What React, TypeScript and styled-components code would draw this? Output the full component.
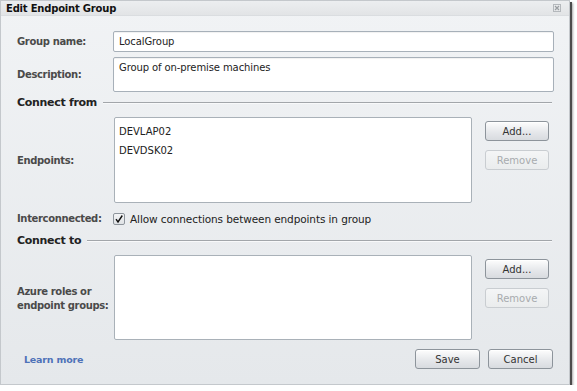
import React, { FC } from 'react'
import styled, { createGlobalStyle } from 'styled-components'

const GlobalStyle = createGlobalStyle`
  html, body {
    margin: 0;
    padding: 0;
    background: #ffffff;
  }
  body {
    font-family: 'DejaVu Sans', Verdana, sans-serif;
    font-size: 10px;
    color: #222;
  }
`

const Dialog = styled.div`
  width: 570px;
  height: 385px;
  box-sizing: border-box;
  border: 1px solid #c4c8cc;
  background: linear-gradient(#f1f3f5, #e5e8eb);
  box-shadow: 2px 2px 0 #4c4c4c, 3px 3px 2px rgba(0, 0, 0, 0.35);
  display: flex;
  flex-direction: column;
`

const TitleBar = styled.div`
  height: 14px;
  display: flex;
  align-items: center;
  justify-content: space-between;
  padding: 0 8px 0 5px;
  background: linear-gradient(#eceef0, #e2e4e6);
  border-bottom: 1px solid #dadde0;
  font-weight: bold;
  font-size: 10px;
  letter-spacing: -0.2px;
  color: #111;
`

const Body = styled.div`
  flex: 1;
  display: flex;
  flex-direction: column;
  padding: 0 15px 0 16px;
`

const Row = styled.div<{ $top: number }>`
  display: grid;
  grid-template-columns: 96px 1fr;
  align-items: center;
  margin-top: ${(p) => p.$top}px;
`

const ListRow = styled.div<{ $top: number }>`
  display: grid;
  grid-template-columns: 97px 358px 1fr;
  align-items: center;
  margin-top: ${(p) => p.$top}px;
`

const Label = styled.div`
  font-weight: bold;
  color: #4a4a4a;
  line-height: 13px;
  white-space: nowrap;
  letter-spacing: -0.35px;
`

const TallLabel = styled(Label)`
  line-height: 14px;
  padding-top: 3px;
`

const TextInput = styled.div<{ $h: number }>`
  height: ${(p) => p.$h}px;
  box-sizing: border-box;
  border: 1px solid #a7b0b9;
  border-radius: 2px;
  background: #fff;
  box-shadow: inset 0 1px 1px rgba(0, 0, 0, 0.06);
  padding: 3px 5px;
  color: #222;
  line-height: 13px;
  letter-spacing: -0.1px;
`

const ListBox = styled.div<{ $h: number }>`
  height: ${(p) => p.$h}px;
  box-sizing: border-box;
  border: 1px solid #a9b1b8;
  border-radius: 2px;
  background: #fff;
  padding: 4px 4px;
  align-self: start;
`

const ListItem = styled.div`
  height: 19px;
  line-height: 19px;
  color: #222;
`

const Section = styled.div<{ $top: number }>`
  display: flex;
  align-items: center;
  gap: 6px;
  margin-top: ${(p) => p.$top}px;
  font-weight: bold;
  font-size: 11px;
  letter-spacing: -0.3px;
  color: #222;
  padding-right: 2px;
  &::after {
    content: '';
    flex: 1;
    height: 1px;
    background: #a2a6aa;
    border-bottom: 1px solid #f8f9fa;
  }
`

const ButtonCol = styled.div`
  align-self: start;
  display: flex;
  flex-direction: column;
  gap: 9px;
  padding: 4px 0 0 13px;
`

const Button = styled.button<{ $disabled?: boolean; $w?: number }>`
  width: ${(p) => p.$w ?? 64}px;
  height: 20px;
  box-sizing: border-box;
  border-radius: 3px;
  font-family: 'DejaVu Sans', Verdana, sans-serif;
  font-size: 10px;
  padding: 0;
  border: 1px solid ${(p) => (p.$disabled ? '#c9cdd1' : '#8d949b')};
  color: ${(p) => (p.$disabled ? '#a8abae' : '#333')};
  background: ${(p) =>
    p.$disabled ? 'linear-gradient(#f4f5f6, #eaeced)' : 'linear-gradient(#fdfdfd, #e6e8eb 55%, #d8dbdf)'};
  box-shadow: ${(p) => (p.$disabled ? 'none' : 'inset 0 1px 0 #fff')};
`

const CheckRow = styled.div`
  display: flex;
  align-items: center;
  gap: 5px;
  color: #222;
  font-size: 10.5px;
  letter-spacing: -0.1px;
`

const CheckBox = styled.span`
  width: 12px;
  height: 12px;
  box-sizing: border-box;
  border: 1px solid #8e959c;
  border-radius: 2px;
  background: linear-gradient(#f4f5f6, #dfe2e5);
  display: flex;
  align-items: center;
  justify-content: center;
`

const Footer = styled.div`
  margin-top: 9px;
  display: flex;
  align-items: center;
  justify-content: space-between;
  padding: 0 1px 0 7px;
`

const Link = styled.a`
  color: #4e72b8;
  font-weight: bold;
  text-decoration: none;
  font-size: 9.5px;
  letter-spacing: -0.2px;
`

const FooterButtons = styled.div`
  display: flex;
  gap: 8px;
`

const CloseIcon: FC = () => (
  <svg width="8" height="8" viewBox="0 0 8 8">
    <rect x="0.5" y="0.5" width="7" height="7" fill="none" stroke="#b4b8bc" />
    <path d="M2 2 L6 6 M6 2 L2 6" stroke="#9a9ea2" strokeWidth="1.2" />
  </svg>
)

const App: FC = () => {
  const endpoints = ['DEVLAP02', 'DEVDSK02']

  return (
    <>
      <GlobalStyle />
      <Dialog>
        <TitleBar>
          <span>Edit Endpoint Group</span>
          <CloseIcon />
        </TitleBar>
        <Body>
          <Row $top={15}>
            <Label>Group name:</Label>
            <TextInput $h={21}>LocalGroup</TextInput>
          </Row>
          <Row $top={5}>
            <Label>Description:</Label>
            <TextInput $h={35}>Group of on-premise machines</TextInput>
          </Row>

          <Section $top={4}>Connect from</Section>
          <ListRow $top={8}>
            <Label>Endpoints:</Label>
            <ListBox $h={86}>
              {endpoints.map((e) => (
                <ListItem key={e}>{e}</ListItem>
              ))}
            </ListBox>
            <ButtonCol>
              <Button>Add...</Button>
              <Button $disabled>Remove</Button>
            </ButtonCol>
          </ListRow>
          <Row $top={9}>
            <Label>Interconnected:</Label>
            <CheckRow>
              <CheckBox>
                <svg width="10" height="10" viewBox="0 0 10 10">
                  <path d="M2 5.2 L4 8 L8.3 1.5" fill="none" stroke="#111" strokeWidth="1.4" />
                </svg>
              </CheckBox>
              Allow connections between endpoints in group
            </CheckRow>
          </Row>

          <Section $top={9}>Connect to</Section>
          <ListRow $top={8}>
            <TallLabel>
              Azure roles or
              <br />
              endpoint groups:
            </TallLabel>
            <ListBox $h={85} />
            <ButtonCol>
              <Button>Add...</Button>
              <Button $disabled>Remove</Button>
            </ButtonCol>
          </ListRow>

          <Footer>
            <Link href="#">Learn more</Link>
            <FooterButtons>
              <Button $w={65}>Save</Button>
              <Button $w={65}>Cancel</Button>
            </FooterButtons>
          </Footer>
        </Body>
      </Dialog>
    </>
  )
}

export default App
